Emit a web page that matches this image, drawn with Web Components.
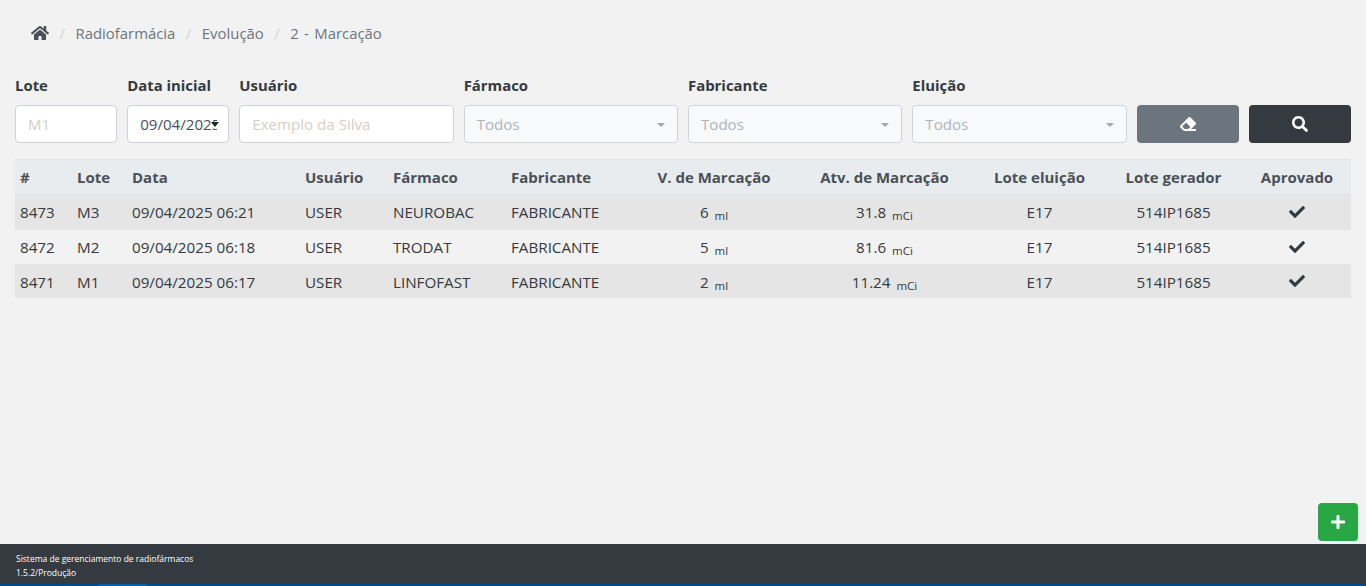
<!DOCTYPE html>
<html lang="pt-BR">
<head>
<meta charset="utf-8">
<title>Marcação</title>
<style>
html, body { margin:0; height:100%; }
body { background:#f2f2f2; font-family:"Open Sans","Noto Sans",sans-serif; color:#343a40; overflow:hidden; }
</style>
</head>
<body>
<app-shell>
  <app-breadcrumb items="Radiofarmácia|Evolução|2 - Marcação"></app-breadcrumb>
  <filter-bar></filter-bar>
  <marcacao-table></marcacao-table>
  <add-button></add-button>
  <app-footer>
    <span>Sistema de gerenciamento de radiofármacos</span>
    <span>1.5.2/Produção</span>
  </app-footer>
</app-shell>

<script>
const icons = {
    home: ['0 0 576 512','M280.37 148.26L96 300.11V464a16 16 0 0 0 16 16l112.06-.29a16 16 0 0 0 15.92-16V368a16 16 0 0 1 16-16h64a16 16 0 0 1 16 16v95.64a16 16 0 0 0 16 16.05L464 480a16 16 0 0 0 16-16V300L295.67 148.26a12.19 12.19 0 0 0-15.3 0zM571.6 251.47L488 182.56V44.05a12 12 0 0 0-12-12h-56a12 12 0 0 0-12 12v72.61L318.47 43a48 48 0 0 0-61 0L4.34 251.47a12 12 0 0 0-1.6 16.9l25.5 31A12 12 0 0 0 45.15 301l235.22-193.74a12.19 12.19 0 0 1 15.3 0L530.9 301a12 12 0 0 0 16.9-1.6l25.5-31a12 12 0 0 0-1.7-16.93z'],
    search: ['0 0 512 512','M505 442.7L405.3 343c-4.5-4.5-10.6-7-17-7H372c27.6-35.3 44-79.7 44-128C416 93.1 322.9 0 208 0S0 93.1 0 208s93.1 208 208 208c48.3 0 92.7-16.4 128-44v16.3c0 6.4 2.5 12.5 7 17l99.7 99.7c9.4 9.4 24.6 9.4 33.9 0l28.3-28.3c9.4-9.4 9.4-24.6.1-34zM208 336c-70.7 0-128-57.2-128-128 0-70.7 57.2-128 128-128 70.7 0 128 57.2 128 128 0 70.7-57.2 128-128 128z'],
    check: ['0 0 512 512','M173.898 439.404l-166.4-166.4c-9.997-9.997-9.997-26.206 0-36.204l36.203-36.204c9.997-9.998 26.207-9.998 36.204 0L192 312.69 432.095 72.596c9.997-9.997 26.207-9.997 36.204 0l36.203 36.204c9.997 9.997 9.997 26.206 0 36.204l-294.4 294.401c-9.998 9.997-26.207 9.997-36.204-.001z'],
    plus: ['0 0 448 512','M416 208H272V64c0-17.67-14.33-32-32-32h-32c-17.67 0-32 14.33-32 32v144H32c-17.67 0-32 14.33-32 32v32c0 17.67 14.33 32 32 32h144v144c0 17.67 14.33 32 32 32h32c17.67 0 32-14.33 32-32V304h144c17.67 0 32-14.33 32-32v-32c0-17.67-14.33-32-32-32z'],
    eraser: ['0 0 512 512','M497.941 273.941c18.745-18.745 18.745-49.137 0-67.882l-160-160c-18.745-18.745-49.137-18.745-67.882 0l-256 256c-18.745 18.745-18.745 49.137 0 67.882l96 96A48.004 48.004 0 0 0 144 480h356c6.627 0 12-5.373 12-12v-40c0-6.627-5.373-12-12-12H355.883l142.058-142.059zm-302.627-62.627l137.373 137.373L265.373 416H150.628l-80-80 124.686-124.686z']
};
function icon(name, h){
    const [box, d] = icons[name];
    const w = h * box.split(' ')[2] / box.split(' ')[3];
    return `<svg width="${w}" height="${h}" viewBox="${box}" fill="currentColor" aria-hidden="true"><path d="${d}"/></svg>`;
}

class AppShell extends HTMLElement {
    constructor(){
        super();
        this.attachShadow({mode:'open'}).innerHTML = `
        <style>
        :host { display:flex; flex-direction:column; height:100vh; position:relative; }
        main { flex:1; padding:0 15px; min-height:0; }
        </style>
        <main><slot></slot></main>
        <slot name="footer"></slot>`;
    }
    connectedCallback(){
        this.querySelector('app-footer').slot = 'footer';
    }
}

class AppBreadcrumb extends HTMLElement {
    constructor(){
        super();
        this.attachShadow({mode:'open'});
    }
    connectedCallback(){
        const items = this.getAttribute('items').split('|');
        this.shadowRoot.innerHTML = `
        <style>
        :host { display:flex; align-items:center; height:24px; padding:21px 0 30px 16px; font-size:14.9px; color:#6c757d; word-spacing:1.5px; }
        svg { display:block; color:#495057; }
        i { font-style:normal; color:#ced4da; padding:0 10.5px; }
        </style>
        ${icon('home',16)}${items.map(t=>`<i>/</i><span>${t}</span>`).join('')}`;
    }
}

class FilterField extends HTMLElement {
    constructor(){
        super();
        this.attachShadow({mode:'open'});
    }
    connectedCallback(){
        const type = this.getAttribute('type');
        const value = this.getAttribute('value');
        let control = `<input placeholder="${this.getAttribute('placeholder') || ''}">`;
        if (type === 'date') control = `<div class="box date"><span>${value}</span><b></b></div>`;
        if (type === 'select') control = `<div class="box select"><span>${value}</span><b></b></div>`;
        this.shadowRoot.innerHTML = `
        <style>
        :host { display:block; min-width:0; }
        label { display:block; font-size:14.9px; font-weight:700; color:#343a40; line-height:20px; height:20px; margin-bottom:10px; white-space:nowrap; }
        input, .box { box-sizing:border-box; width:100%; height:38px; border:1px solid #ced4da; border-radius:4px; background:#fff; font:inherit; font-size:15.1px; padding:0 12px; outline:0; color:#495057; }
        input::placeholder { color:#d3cfc8; opacity:1; }
        .box { display:flex; align-items:center; position:relative; overflow:hidden; white-space:nowrap; }
        .date span { overflow:hidden; width:77px; flex:none; }
        .date b { position:absolute; left:83px; top:16px; border:4.5px solid transparent; border-top:5px solid #222; border-bottom:0; }
        .select { background:#f8f9fa; color:#adb5bd; }
        .select b { position:absolute; right:12px; top:17px; border:4.5px solid transparent; border-top:4.5px solid #a3a8ad; border-bottom:0; }
        </style>
        <label>${this.getAttribute('label')}</label>
        ${control}`;
    }
}

class FilterBar extends HTMLElement {
    constructor(){
        super();
        this.attachShadow({mode:'open'}).innerHTML = `
        <style>
        :host { display:grid; grid-template-columns:repeat(12,1fr); column-gap:10px; margin-bottom:16px; align-items:end; }
        .s2 { grid-column:span 2; }
        button { height:38px; border:0; border-radius:4px; color:#fff; display:flex; align-items:center; justify-content:center; padding:0; }
        .clear { background:#6c757d; }
        .find { background:#343a40; }
        </style>
        <filter-field label="Lote" placeholder="M1"></filter-field>
        <filter-field label="Data inicial" type="date" value="09/04/2025"></filter-field>
        <filter-field class="s2" label="Usuário" placeholder="Exemplo da Silva"></filter-field>
        <filter-field class="s2" label="Fármaco" type="select" value="Todos"></filter-field>
        <filter-field class="s2" label="Fabricante" type="select" value="Todos"></filter-field>
        <filter-field class="s2" label="Eluição" type="select" value="Todos"></filter-field>
        <button class="clear">${icon('eraser',16)}</button>
        <button class="find">${icon('search',16)}</button>`;
    }
}

const rows = [
    ['8473','M3','09/04/2025 06:21','USER','NEUROBAC','FABRICANTE','6','31.8','E17','514IP1685'],
    ['8472','M2','09/04/2025 06:18','USER','TRODAT','FABRICANTE','5','81.6','E17','514IP1685'],
    ['8471','M1','09/04/2025 06:17','USER','LINFOFAST','FABRICANTE','2','11.24','E17','514IP1685']
];
class MarcacaoTable extends HTMLElement {
    constructor(){
        super();
        const widths = [57,55,173,88,118,128,160,181,129,139,108];
        const heads = ['#','Lote','Data','Usuário','Fármaco','Fabricante','V. de Marcação','Atv. de Marcação','Lote eluição','Lote gerador','Aprovado'];
        this.attachShadow({mode:'open'}).innerHTML = `
        <style>
        :host { display:block; }
        table { width:100%; table-layout:fixed; border-collapse:collapse; font-size:15.2px; color:#343a40; }
        th, td { padding:0 5px; height:34px; border-top:1px solid #e2e4e8; text-align:left; white-space:nowrap; font-weight:400; }
        thead th { background:#e9ecef; color:#495057; font-weight:700; font-size:15px; border-bottom:1px solid #dee2e6; height:34px; }
        tbody tr:nth-child(odd) { background:#e5e5e5; }
        tbody tr:last-child td { height:33px; }
        .c { text-align:center; }
        small { font-size:11.5px; margin-left:2px; position:relative; top:2px; }
        svg { display:block; margin:-1px auto 0; }
        </style>
        <table>
          <colgroup>${widths.map(w=>`<col style="width:${w}px">`).join('')}</colgroup>
          <thead><tr>${heads.map((h,i)=>`<th class="${i>5?'c':''}">${h}</th>`).join('')}</tr></thead>
          <tbody>${rows.map(r=>`<tr>
            ${r.slice(0,6).map(v=>`<td>${v}</td>`).join('')}
            <td class="c">${r[6]} <small>ml</small></td>
            <td class="c">${r[7]} <small>mCi</small></td>
            <td class="c">${r[8]}</td>
            <td class="c">${r[9]}</td>
            <td class="c">${icon('check',16)}</td>
          </tr>`).join('')}</tbody>
        </table>`;
    }
}

class AddButton extends HTMLElement {
    constructor(){
        super();
        this.attachShadow({mode:'open'}).innerHTML = `
        <style>
        :host { position:absolute; right:8px; bottom:45px; width:40px; height:38px; border-radius:4px; background:#28a745; color:#fff; display:flex; align-items:center; justify-content:center; }
        </style>
        ${icon('plus',16)}`;
    }
}

class AppFooter extends HTMLElement {
    constructor(){
        super();
        this.attachShadow({mode:'open'}).innerHTML = `
        <style>
        :host { display:flex; flex-direction:column; box-sizing:border-box; height:42px; padding:8px 16px 0; background:#343a40; color:#fff; font-size:8.5px; line-height:14px; border-bottom:2px solid #004a8f; position:relative; }
        .seg { position:absolute; left:99px; bottom:-2px; width:48px; height:2px; background:#0062a8; }
        ::slotted(span) { display:block; }
        </style>
        <slot></slot><div class="seg"></div>`;
    }
}

customElements.define('app-shell', AppShell);
customElements.define('app-breadcrumb', AppBreadcrumb);
customElements.define('filter-field', FilterField);
customElements.define('filter-bar', FilterBar);
customElements.define('marcacao-table', MarcacaoTable);
customElements.define('add-button', AddButton);
customElements.define('app-footer', AppFooter);
</script>
</body>
</html>
